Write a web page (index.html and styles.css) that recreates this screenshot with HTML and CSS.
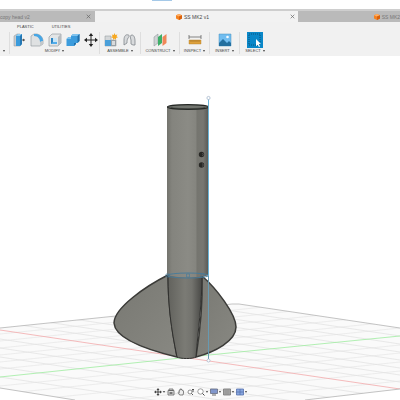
FILE: index.html
```html
<!DOCTYPE html>
<html lang="en">
<head>
    <meta charset="UTF-8">
    <meta name="viewport" content="width=device-width, initial-scale=1.0">
    <title>SS MK2 v1</title>
    <link rel="stylesheet" href="styles.css">
</head>
<body>

<header class="titlebar"><div class="progress"></div></header>

<!-- Document tabs -->
<nav class="tabs">
    <div class="tab tab-first">
        <a href="#">copy head v2</a>
        <button class="close" aria-label="Close copy head v2"><svg viewBox="0 0 5 5"><path d="M.7.7l3.6 3.6M4.3.7L.7 4.3"/></svg></button>
    </div>
    <div class="tab active">
        <svg class="cube" viewBox="0 0 6 6"><path fill="#f58220" d="M3 0l3 1.3v3.2L3 6 0 4.5V1.3z"/><path fill="#ffb066" d="M3 0l3 1.3-3 1.3L0 1.3z"/><path fill="#d9600c" d="M3 2.6l3-1.3v3.2L3 6z"/></svg>
        <a href="#">SS MK2 v1</a>
        <button class="close" aria-label="Close SS MK2 v1"><svg viewBox="0 0 5 5"><path d="M.7.7l3.6 3.6M4.3.7L.7 4.3"/></svg></button>
    </div>
    <div class="tab tab-last">
        <svg class="cube" viewBox="0 0 6 6"><path fill="#f58220" d="M3 0l3 1.3v3.2L3 6 0 4.5V1.3z"/><path fill="#ffb066" d="M3 0l3 1.3-3 1.3L0 1.3z"/><path fill="#d9600c" d="M3 2.6l3-1.3v3.2L3 6z"/></svg>
        <a href="#">SS MK2</a>
    </div>
</nav>

<!-- Toolbar -->
<div class="toolbar">
    <div class="modes">
        <a href="#">PLASTIC</a>
        <a href="#">UTILITIES</a>
    </div>
    <div class="groups">
        <div class="group group-create">
            <button class="menu" aria-label="Create"><i class="arrow"></i></button>
        </div>
        <div class="group group-modify">
            <div class="icons">
                <svg viewBox="0 0 14 14"><path fill="#c9ccce" stroke="#8d9398" stroke-width=".5" d="M2 3l3-2h3v12H2z"/><path fill="#3b9bdc" d="M4 3l2-2h4v10l-2 2H4z"/><path fill="#8dccf2" d="M4 3l2-2h4L8 3z"/><path fill="#2478b4" d="M8 3l2-2v10l-2 2z"/><path stroke="#333" stroke-width=".8" d="M10 7h2"/><path fill="#333" d="M11.3 5.5L13 7l-1.700 1.500z"/></svg>
                <svg viewBox="0 0 14 14"><path fill="#dfe1e2" stroke="#8b9197" stroke-width=".6" d="M1 3l3-2h3c4 1 6 4 6 7v3l-3 2H1z"/><path fill="#47a6e5" d="M4 1h3c4 1 6 4 6 7l-3 1C10 6 8 3 4 3z"/><path fill="#c4c8cb" d="M10 9l3-1v3l-3 2z"/></svg>
                <svg viewBox="0 0 14 14"><path fill="#e3e5e6" stroke="#888f95" stroke-width=".6" d="M1 4l3-3h9v9l-3 3H1z"/><path fill="#b7bcc0" d="M10 4l3-3v9l-3 3z"/><path fill="#2e86c4" d="M3 5h6v6H3z"/><path fill="#c6e5f8" d="M5 5h4v4H5z"/><path fill="#52adeb" d="M3 11l2-2h4v2z"/></svg>
                <svg viewBox="0 0 14 14"><path fill="#3c9cdd" d="M5 3l2-2h6.500v7l-2 2H10v1l-2 2H.5V6l2-2H5z"/><path fill="#80c3ee" d="M5 3l2-2h6.500l-2 2zM.5 6l2-2H5v2z"/><path fill="#216fa9" d="M11.500 3l2-2v7l-2 2zM8 10h2v1l-2 2z"/></svg>
                <svg viewBox="0 0 14 14"><path fill="none" stroke="#222" d="M7 2v10M2 7h10"/><path fill="#222" d="M7 0l2.200 3H4.800zM7 14l2.200-3H4.800zM0 7l3-2.200v4.400zM14 7l-3-2.200v4.400z"/></svg>
            </div>
            <button class="menu">MODIFY<i class="arrow"></i></button>
        </div>
        <div class="group group-assemble">
            <div class="icons">
                <svg viewBox="0 0 14 14"><path fill="#d4d7d9" stroke="#8b9197" stroke-width=".5" d="M1 3h6v4h5v6H1z"/><path fill="#4a9fd9" d="M1 7h6v6H1z"/><path fill="#9aa0a5" d="M7 7h5v6H7z"/><path fill="#d8dbdd" d="M8 8h3v4H8z"/><path fill="#f6a821" d="M10.500 0l.9 2 2-.6-.9 1.900 1.500 1-2 .6.100 2-1.600-1.300L9 7l.1-2.100-2.100-.6 1.600-1L7.800 1.500l1.900.5z"/></svg>
                <svg viewBox="0 0 14 14"><g fill="#d8dadc" stroke="#80868b" stroke-width=".8"><path d="M2 12V7c0-4 2-6 4-5 2 0 1 2 0 3-1 2-1 3-1 5z"/><path d="M9 11V7C8 4 8 2 10 2c2 0 3 3 3 6v4h-2z"/></g></svg>
            </div>
            <button class="menu">ASSEMBLE<i class="arrow"></i></button>
        </div>
        <div class="group group-construct">
            <div class="icons">
                <svg viewBox="0 0 14 14"><path fill="#cfd3d5" stroke="#858c91" stroke-width=".5" d="M1 4l4-3v9l-4 3z"/><path fill="#3daf68" d="M5 4l4-3v9l-4 3z"/><path fill="#ef8758" d="M9.500 4l4-3v9l-4 3z"/></svg>
            </div>
            <button class="menu">CONSTRUCT<i class="arrow"></i></button>
        </div>
        <div class="group group-small">
            <div class="icons">
                <svg viewBox="0 0 14 14"><path stroke="#555" stroke-width=".7" d="M1 2v4M13 2v4M1 4h12"/><path fill="#dda13c" stroke="#b47a22" stroke-width=".4" d="M1 7h12v4H1z"/><path stroke="#85591a" stroke-width=".5" d="M3 7v2M5 7v2M7 7v2M9 7v2M11 7v2"/></svg>
            </div>
            <button class="menu">INSPECT<i class="arrow"></i></button>
        </div>
        <div class="group group-small">
            <div class="icons">
                <svg viewBox="0 0 14 14"><path fill="#71bdf0" stroke="#4b91be" stroke-width=".5" d="M1 1h12v12H1z"/><path fill="#236f9f" d="M1 10l4-4 4 4 2-2 2 2v3H1z"/><circle cx="9.500" cy="4" r="1.300" fill="#f4faff"/></svg>
            </div>
            <button class="menu">INSERT<i class="arrow"></i></button>
        </div>
        <div class="group group-select">
            <div class="icons">
                <svg class="select-icon" viewBox="0 0 16 16"><path fill="#0a87c8" d="M0 0h16v16H0z"/><path fill="none" stroke="#07344f" stroke-width=".6" stroke-dasharray="1 1" d="M2 2h11v11H2z"/><path fill="#fff" d="M9 7l5 5-2.200.1 1.300 2.500-1.200.5-1.200-2.400L9 14.200z"/></svg>
            </div>
            <button class="menu">SELECT<i class="arrow"></i></button>
        </div>
    </div>
</div>

<main class="canvas">
    <svg class="scene" viewBox="0 56 400 344" role="img" aria-label="3D model">
        <defs>
            <linearGradient id="tube">
                <stop offset="0" stop-color="#73736d"/>
                <stop offset=".12" stop-color="#84847e"/>
                <stop offset=".5" stop-color="#8b8b85"/>
                <stop offset=".68" stop-color="#85857f"/>
                <stop offset=".72" stop-color="#75756f"/>
                <stop offset=".86" stop-color="#777772"/>
                <stop offset="1" stop-color="#555551"/>
            </linearGradient>
            <linearGradient id="cone">
                <stop offset="0" stop-color="#62625d"/>
                <stop offset=".5" stop-color="#7b7b75"/>
                <stop offset=".7" stop-color="#73736e"/>
                <stop offset="1" stop-color="#484845"/>
            </linearGradient>
            <linearGradient id="fin" x2="1" y2="1">
                <stop offset="0" stop-color="#787872"/>
                <stop offset="1" stop-color="#888882"/>
            </linearGradient>
            <clipPath id="floor"><path d="M0 328L237 304 400 328V389L305 400H75L0 388z"/></clipPath>
        </defs>

        <!-- Floor grid -->
        <g clip-path="url(#floor)" fill="none">
            <path fill="#fafafa" d="M0 300h400v100H0z"/>
            <path stroke="#dcdcdc" stroke-width=".6" d="M0 276l400 60M0 284l400 60M0 292l400 60M0 300l400 60M0 308l400 60M0 315l400 60M0 322l400 60M0 339l400 60M0 348l400 60M0 357l400 60M0 367l400 60M0 377l400 60"/>
            <path stroke="#e2e2e2" stroke-width=".6" d="M0 334l400-41M0 341l400-41M0 348l400-41M0 355l400-41M0 362l400-41M0 369l400-41M0 386l400-41M0 394l400-41M0 403l400-41M0 412l400-41M0 422l400-41"/>
            <path stroke="#f3a9ab" stroke-width=".8" d="M0 330L209 361 400 389"/>
            <path stroke="#9eec9f" stroke-width=".8" d="M0 377L209 355 400 336"/>
        </g>
        <path fill="none" stroke="#a9a9a9" stroke-width=".7" d="M0 328L232 304h7L400 328M0 388L75 400M305 400L400 389"/>

        <!-- Fins -->
        <g fill="url(#fin)" stroke="#3b3b38" stroke-width="1.500">
            <path d="M168 275C146 286 114 308 114 323C115 339 148 350 177 357C172 332 168 305 168 275z"/>
            <path d="M202 276C216 288 236 314 236 327C236 341 215 352 196 357C200 332 203 306 202 276z"/>
        </g>

        <!-- Body -->
        <path fill="url(#cone)" stroke="#30302e" stroke-width="1" d="M168 275H202C202 305 198 330 196 357C193 359 180 359 177 357C171 328 168 306 168 275z"/>
        <path fill="url(#tube)" d="M167 107H209V275C203 278 174 278 167 275z"/>
        <ellipse cx="188" cy="107" rx="20.500" ry="2.300" fill="#72756f" stroke="#252825" stroke-width="1.200"/>
        <path fill="none" stroke="#343834" stroke-width=".6" d="M171 107.500c7 1.500 27 1.500 34 0"/>
        <g fill="#282825"><circle cx="201.500" cy="154.500" r="2.700"/><circle cx="201.500" cy="165" r="2.700"/></g>
        <g fill="none" stroke="#777" stroke-width=".6"><path d="M202.500 153q1.500 1.500 0 3M202.500 163.500q1.500 1.500 0 3"/></g>

        <!-- Sketch axis -->
        <g fill="none" stroke="#447b9c" stroke-width=".9">
            <ellipse cx="188" cy="275.500" rx="20.500" ry="2.500"/>
            <path d="M186.500 274h3v3h-3zM166 274h3v3h-3zM201 274h3v3h-3z" stroke-width=".6"/>
        </g>
        <path stroke="#6bb5d9" stroke-width="1" d="M208.500 99V276"/>
        <path stroke="#6799b1" stroke-width="1" d="M208.500 276V359"/>
        <g fill="#fff" stroke="#9cafc5" stroke-width=".7"><circle cx="208.500" cy="98" r="1.600"/><circle cx="208.500" cy="360.500" r="1.500"/></g>
    </svg>

    <!-- View controls -->
    <div class="viewbar">
        <button class="view" aria-label="Orbit"><svg viewBox="0 0 8 8"><path fill="none" stroke="#444" d="M4 1v6M1 4h6"/><path fill="#444" d="M4 0l1.500 2h-3zM4 8L2.500 6h3zM0 4l2-1.500v3zM8 4L6 2.500v3z"/></svg><i class="arrow"></i></button>
        <button class="view" aria-label="Look at"><svg viewBox="0 0 8 8"><path fill="#ddd" stroke="#666" stroke-width=".8" d="M1 2.500h6v4.500H1zM2 1h4v1.500H2z"/><path fill="#777" d="M2.500 4h3v2h-3z"/></svg></button>
        <button class="view" aria-label="Pan"><svg viewBox="0 0 8 8"><path fill="#eee" stroke="#555" stroke-width=".7" d="M2.700 7L1 4.500q.3-.9 1.300.2V2q.7-.6 1 0V1q.7-.7 1.200 0v.8q.7-.5 1 .2v.6q.8-.4 1 .3V5L6 7z"/></svg></button>
        <button class="view" aria-label="Zoom"><svg viewBox="0 0 8 8"><circle cx="3" cy="4" r="2" fill="#fff" stroke="#666" stroke-width=".7"/><path fill="none" stroke="#444" stroke-width=".9" d="M4.500 5.500L6 7M6 4V1M5 2l1-1 1 1"/></svg></button>
        <button class="view" aria-label="Zoom window"><svg viewBox="0 0 8 8"><circle cx="3.500" cy="3.500" r="2.700" fill="#fff" stroke="#777" stroke-width=".7"/><path stroke="#444" d="M5.500 5.500l2 2"/></svg><i class="arrow"></i></button>
        <button class="view" aria-label="Display settings"><svg viewBox="0 0 8 8"><path fill="#8197cc" stroke="#666c80" stroke-width=".8" d="M.5 1h7v4.500h-7z"/><path stroke="#666" d="M2 7h4"/></svg><i class="arrow"></i></button>
        <button class="view" aria-label="Grid and snaps"><svg viewBox="0 0 8 8"><path fill="#aaa" stroke="#777" stroke-width=".8" d="M.5 1h7v6h-7z"/><path stroke="#888" stroke-width=".5" d="M3 1v6M5 1v6M1 3h6M1 5h6"/></svg><i class="arrow"></i></button>
        <button class="view" aria-label="Viewports"><svg viewBox="0 0 8 8"><path fill="#89a7df" stroke="#5771ad" stroke-width=".8" d="M.5 1h7v6h-7zM4 1v6M.5 4h7"/></svg><i class="arrow"></i></button>
    </div>
</main>

</body>
</html>
```

FILE: styles.css
```css
* {
    box-sizing: border-box;
}

body {
    margin: 0;
    min-height: 100vh;
    display: flex;
    flex-direction: column;
    background-color: #fff;
    font-family: "Liberation Sans", Arial, sans-serif;
    font-size: 4px;
    line-height: 6px;
    color: #444;
    overflow: hidden;
}

a {
    color: inherit;
    text-decoration: none;
}

button {
    display: flex;
    align-items: center;
    justify-content: center;
    padding: 0;
    border: none;
    background: none;
    font: inherit;
    color: inherit;
    cursor: pointer;
}

svg {
    display: block;
    flex: none;
}

.titlebar {
    height: 9px;
}

.progress {
    width: 5%;
    height: 1px;
    margin-left: 38%;
    background-color: #a5c9e8;
}

.tabs {
    display: grid;
    grid-template-columns: 95fr 203fr 102fr;
    height: 13px;
    border-top: 2px solid #cecece;
    background-color: #bababa;
    font-size: 5px;
}

.tab {
    display: flex;
    align-items: center;
    min-width: 0;
    color: #777;
}

.tab-first {
    padding-right: 4px;
    justify-content: space-between;
}

.tab.active {
    padding-right: 3px;
    background-color: #f2f2f2;
    color: #444;
}

.tab.active .cube {
    margin-left: auto;
}

.tab.active .close {
    margin-left: auto;
}

.tab-last {
    justify-content: flex-end;
    white-space: nowrap;
}

.cube {
    width: 6px;
    height: 6px;
    margin-right: 2px;
}

.close svg {
    width: 5px;
    height: 5px;
    fill: none;
    stroke: #666;
    stroke-width: 0.7px;
}

.toolbar {
    height: 34px;
    background-color: #f1f1f1;
}

.modes {
    display: flex;
    gap: 18px;
    padding: 2px 0 0 17px;
}

.groups {
    display: flex;
    padding-top: 2px;
}

.group {
    display: flex;
    flex-direction: column;
    align-items: center;
    justify-content: flex-end;
    height: 22px;
    border-right: 1px solid #dedede;
}

.group-create {
    width: 10px;
    padding-right: 4px;
}

.group-modify {
    width: 90px;
}

.group-assemble {
    width: 41px;
}

.group-construct {
    width: 39px;
}

.group-small {
    width: 30px;
}

.group-select {
    width: 30px;
    border-right: none;
}

.icons {
    display: flex;
    align-items: center;
    gap: 4px;
    height: 16px;
}

.icons svg {
    width: 14px;
    height: 14px;
}

.icons .select-icon {
    width: 16px;
    height: 16px;
}

.menu {
    height: 6px;
}

.arrow {
    margin-left: 2px;
    border-top: 2px solid #444;
    border-left: 1px solid transparent;
    border-right: 1px solid transparent;
}

.canvas {
    position: relative;
    flex: 1;
}

.scene {
    width: 100%;
}

/* floats over the bottom of the model view */
.viewbar {
    position: absolute;
    left: 0;
    right: 0;
    bottom: 4px;
    display: flex;
    justify-content: center;
    gap: 2px;
}

.view svg {
    width: 8px;
    height: 8px;
}

.view .arrow {
    margin-left: 1px;
}
```
